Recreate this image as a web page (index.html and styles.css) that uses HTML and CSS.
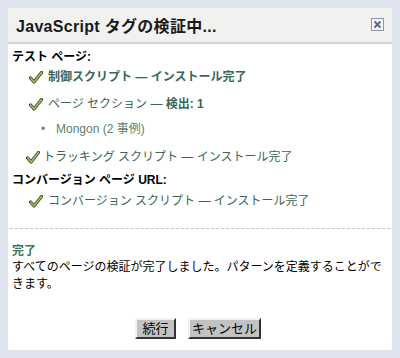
FILE: index.html
```html
<!DOCTYPE html>
<html lang="ja">
<head>
<meta charset="utf-8">
<title>JavaScript タグの検証中</title>
<link rel="stylesheet" href="styles.css">
</head>
<body>
<div class="dialog">
  <div class="dialog-header">
    <h1 class="dialog-title">JavaScript タグの検証中...</h1>
    <span class="close-btn">
      <svg width="13" height="13" viewBox="0 0 13 13"><rect x="0.5" y="0.5" width="12" height="12" fill="#f4f6f8" stroke="#8a98a8"/><path d="M3.5 3.5 L9.5 9.5 M9.5 3.5 L3.5 9.5" stroke="#5a6878" stroke-width="1.8"/></svg>
    </span>
  </div>
  <div class="dialog-body">
    <div class="section-label">テスト ページ:</div>
    <ul class="check-list first-list">
      <li class="check-item strong">
        <svg class="check" width="14" height="13" viewBox="0 0 14 13"><path d="M1.5 7 L5 11 L12.5 1.5" fill="none" stroke="#3a4a30" stroke-width="3.2" stroke-linecap="round" stroke-linejoin="round"/><path d="M1.5 7 L5 11 L12.5 1.5" fill="none" stroke="#a8c860" stroke-width="1.4" stroke-linecap="round" stroke-linejoin="round"/></svg>
        <span>制御スクリプト — インストール完了</span>
      </li>
      <li class="check-item">
        <svg class="check" width="14" height="13" viewBox="0 0 14 13"><path d="M1.5 7 L5 11 L12.5 1.5" fill="none" stroke="#3a4a30" stroke-width="3.2" stroke-linecap="round" stroke-linejoin="round"/><path d="M1.5 7 L5 11 L12.5 1.5" fill="none" stroke="#a8c860" stroke-width="1.4" stroke-linecap="round" stroke-linejoin="round"/></svg>
        <span>ページ セクション — <b>検出: 1</b></span>
      </li>
    </ul>
    <ul class="sub-list">
      <li class="sub-item"><span class="bullet">•</span>Mongon (2 事例)</li>
    </ul>
    <ul class="check-list tracking-list">
      <li class="check-item shifted">
        <svg class="check" width="14" height="13" viewBox="0 0 14 13"><path d="M1.5 7 L5 11 L12.5 1.5" fill="none" stroke="#3a4a30" stroke-width="3.2" stroke-linecap="round" stroke-linejoin="round"/><path d="M1.5 7 L5 11 L12.5 1.5" fill="none" stroke="#a8c860" stroke-width="1.4" stroke-linecap="round" stroke-linejoin="round"/></svg>
        <span>トラッキング スクリプト — インストール完了</span>
      </li>
    </ul>
    <div class="section-label">コンバージョン ページ URL:</div>
    <ul class="check-list conv-list">
      <li class="check-item">
        <svg class="check" width="14" height="13" viewBox="0 0 14 13"><path d="M1.5 7 L5 11 L12.5 1.5" fill="none" stroke="#3a4a30" stroke-width="3.2" stroke-linecap="round" stroke-linejoin="round"/><path d="M1.5 7 L5 11 L12.5 1.5" fill="none" stroke="#a8c860" stroke-width="1.4" stroke-linecap="round" stroke-linejoin="round"/></svg>
        <span>コンバージョン スクリプト — インストール完了</span>
      </li>
    </ul>
    <div class="divider"></div>
    <div class="done-title">完了</div>
    <p class="done-text">すべてのページの検証が完了しました。パターンを定義することができます。</p>
    <div class="buttons">
      <button class="btn btn-continue">続行</button>
      <button class="btn btn-cancel">キャンセル</button>
    </div>
  </div>
</div>
</body>
</html>
```
FILE: styles.css
```css
html, body {
  margin: 0;
  padding: 0;
}
body {
  background: #dfe4ef;
  width: 400px;
  height: 358px;
  padding: 8px;
  box-sizing: border-box;
  font-family: "Liberation Sans", "Noto Sans CJK JP", sans-serif;
  font-size: 12px;
  color: #000;
}
.dialog {
  width: 384px;
  height: 342px;
  background: #fff;
  display: flex;
  flex-direction: column;
}
.dialog-header {
  height: 34px;
  background: #f1f1f0;
  border-bottom: 2px solid #d4d4d4;
  display: flex;
  align-items: center;
  justify-content: space-between;
  padding: 0 8px 0 8px;
}
.dialog-title {
  margin: 0;
  font-size: 16px;
  font-weight: bold;
  color: #1a1a1a;
  letter-spacing: 0.3px;
}
.close-btn {
  display: flex;
  width: 13px;
  height: 13px;
  margin-top: -2px;
}
.dialog-body {
  padding: 4px 4px 0 4px;
  display: flex;
  flex-direction: column;
  flex: 1;
}
.section-label {
  height: 18px;
  line-height: 18px;
  font-weight: bold;
}
ul {
  list-style: none;
  margin: 0;
  padding: 0;
}
.check-list {
  padding-left: 17px;
}
.first-list {
  margin-top: 2px;
}
.check-item {
  display: flex;
  align-items: center;
  height: 18px;
  line-height: 18px;
  color: #3a6656;
}
.check-item + .check-item {
  margin-top: 9px;
}
.check-item b {
  font-weight: bold;
}
.check-item.strong {
  font-weight: bold;
}
.check {
  flex: none;
  margin-right: 5px;
}
.check-item.shifted {
  margin-left: -3px;
}
.check-item.shifted .check {
  margin-right: 3px;
}
.sub-list {
  margin-top: 7px;
  padding-left: 29px;
}
.sub-item {
  height: 18px;
  line-height: 18px;
  color: #5d7f72;
}
.bullet {
  display: inline-block;
  width: 15px;
  color: #6a8c80;
}
.tracking-list {
  margin-top: 10px;
  margin-bottom: 5px;
}
.conv-list {
  margin-top: 3px;
}
.divider {
  margin: 18px -2px 0 -2px;
  border-top: 1px dashed #c4c4c4;
}
.done-title {
  margin-top: 14px;
  height: 16px;
  line-height: 16px;
  font-weight: bold;
  color: #3f7462;
}
.done-text {
  margin: 0;
  line-height: 17px;
  padding-right: 4px;
}
.buttons {
  margin-top: 25px;
  display: flex;
  justify-content: center;
  gap: 12px;
  margin-left: -4px;
}
.btn {
  box-sizing: border-box;
  height: 21px;
  padding: 0;
  background: #c3c3c3;
  border: 2px solid;
  border-color: #f2f2f2 #333 #333 #f2f2f2;
  font-family: "Liberation Sans", "Noto Sans CJK JP", sans-serif;
  font-size: 13px;
  color: #000;
  line-height: 15px;
  white-space: nowrap;
}
.btn-continue {
  width: 41px;
}
.btn-cancel {
  width: 73px;
}
```
